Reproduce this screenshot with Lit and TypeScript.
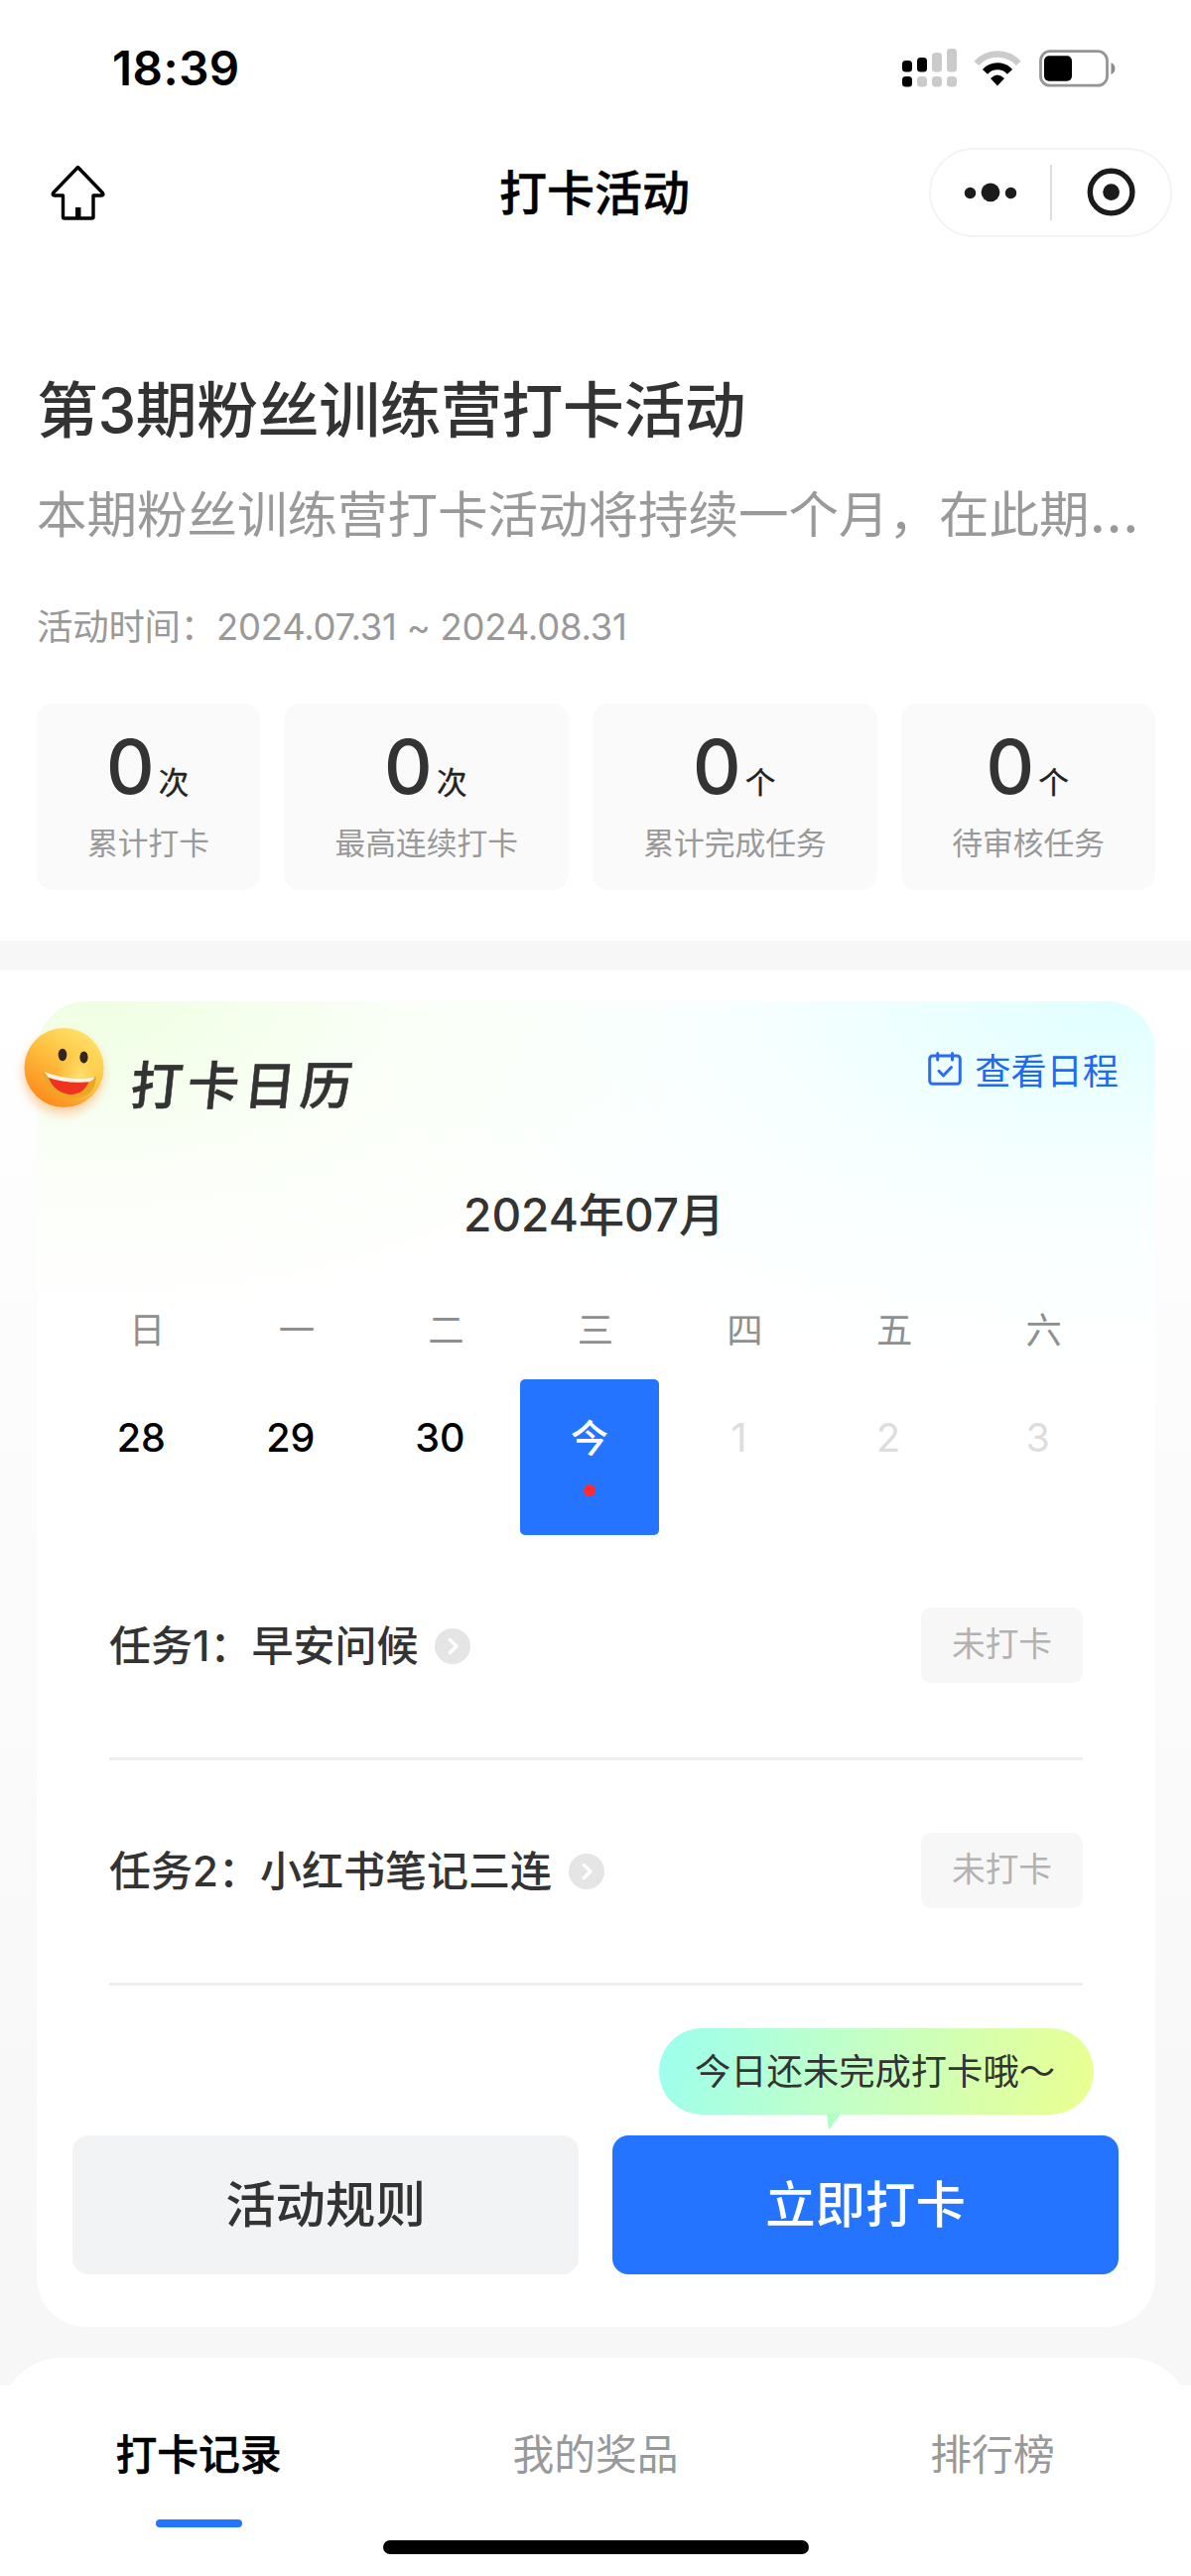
import { LitElement, html, css, svg } from "lit";
import { customElement, property } from "lit/decorators.js";
import { classMap } from "lit/directives/class-map.js";

const homeIcon = svg`<svg class="icon" width="60" height="60" viewBox="0 0 60 60">
  <path d="M30.5 4.5 L5.5 30.5 Q4.5 33 7 33 H15.5 V55 Q15.5 56 17 56 H44 Q46 56 46 55 V33 H54 Q57 33 55.5 30.5 Z"
    fill="none" stroke="#000" stroke-width="3.4" stroke-linejoin="round"/>
  <rect x="28" y="45" width="5.500" height="11" fill="#000"/>
</svg>`;

const signalIcon = svg`<svg class="icon" width="55" height="39" viewBox="0 0 55 39">
  <g fill="#000">
    <rect x="0" y="12" width="10" height="11.5" rx="3.5"/>
    <rect x="15" y="9" width="10" height="14.5" rx="3.5"/>
    <rect x="0" y="28" width="10" height="10.5" rx="3.5"/>
  </g>
  <g fill="#cbcbcb">
    <rect x="30" y="4" width="10" height="19.500" rx="3.500"/>
    <rect x="45" y="0" width="10" height="23.500" rx="3.500"/>
    <rect x="15" y="28" width="10" height="10.500" rx="3.500"/>
    <rect x="30" y="28" width="10" height="10.500" rx="3.500"/>
    <rect x="45" y="28" width="10" height="10.500" rx="3.500"/>
  </g>
</svg>`;

const wifiIcon = svg`<svg class="icon" width="48" height="36" viewBox="0 0 48 36">
  <path d="M2.800 12.900 A28.500 28.500 0 0 1 45.200 12.900" fill="none" stroke="#cbcbcb" stroke-width="6.500"/>
  <path d="M11.500 21.300 A17 17 0 0 1 36.500 21.300" fill="none" stroke="#000" stroke-width="7"/>
  <path d="M17 28 Q24 21 31 28 L24 35.500 Z" fill="#000"/>
</svg>`;

const batteryIcon = svg`<svg class="icon" width="77" height="38" viewBox="0 0 77 38">
  <rect x="1.500" y="1.700" width="67" height="34.500" rx="9.500" fill="none" stroke="#959595" stroke-width="2.800"/>
  <rect x="5" y="6.300" width="28" height="25.400" rx="5" fill="#000"/>
  <path d="M72.500 13 Q76.500 15 76.500 19 Q76.500 23 72.500 25 Z" fill="#8c8c8c"/>
</svg>`;

const moreIcon = svg`<svg class="icon" width="54" height="22" viewBox="0 0 54 22">
  <g fill="#1b1b1b"><circle cx="6.500" cy="11.500" r="5.700"/><circle cx="27" cy="10.800" r="9.400"/><circle cx="47.500" cy="11.500" r="5.700"/></g>
</svg>`;

const targetIcon = svg`<svg class="icon" width="50" height="50" viewBox="0 0 50 50">
  <circle cx="25.600" cy="24.600" r="21.300" fill="none" stroke="#1b1b1b" stroke-width="5.400"/>
  <circle cx="25.600" cy="24.600" r="8.400" fill="#1b1b1b"/>
</svg>`;

const calendarIcon = svg`<svg class="icon" width="34" height="34" viewBox="0 0 34 34">
  <g fill="none" stroke="#2a6df4" stroke-width="3" stroke-linecap="round" stroke-linejoin="round">
    <rect x="1.700" y="4" width="30.600" height="28.300" rx="3"/>
    <path d="M9.700 1.500 V8 M24.500 1.500 V8"/>
    <path d="M11 19.300 L15.500 24 L23.500 15.500"/>
  </g>
</svg>`;

const chevronIcon = svg`<svg class="icon" width="36" height="36" viewBox="0 0 36 36">
  <circle cx="18" cy="18" r="18" fill="#e5e5e5"/>
  <path d="M15.300 11.500 L22 18 L15.300 24.500" fill="none" stroke="#fff" stroke-width="3.400" stroke-linecap="round" stroke-linejoin="round"/>
</svg>`;

const smileIcon = svg`<svg width="110" height="120" viewBox="0 0 110 120">
  <defs>
    <linearGradient id="face" x1="0.78" y1="0.08" x2="0.22" y2="0.95">
      <stop offset="0" stop-color="#ffe067"/><stop offset="0.42" stop-color="#fdc240"/><stop offset="1" stop-color="#fd8a1c"/>
    </linearGradient>
    <radialGradient id="shine" cx="0.5" cy="0.5" r="0.5">
      <stop offset="0" stop-color="#ffe77c" stop-opacity="0.9"/><stop offset="1" stop-color="#ffd95c" stop-opacity="0"/>
    </radialGradient>
    <filter id="glow" x="-30%" y="-30%" width="160%" height="160%"><feGaussianBlur stdDeviation="5"/></filter>
  </defs>
  <circle cx="54" cy="61" r="41" fill="#ffb070" opacity="0.55" filter="url(#glow)"/>
  <circle cx="54.500" cy="55" r="40" fill="url(#face)"/>
  <ellipse cx="70" cy="64" rx="24" ry="26" fill="url(#shine)"/>
  <ellipse cx="53" cy="42" rx="4.300" ry="6.200" fill="#33261c"/>
  <ellipse cx="74.500" cy="44.500" rx="4.100" ry="6" fill="#33261c"/>
  <path d="M33 58 Q60 70 87 64 Q86 86 61 86 Q37 83 33 58 Z" fill="#eaa724"/>
  <path d="M38 63 Q60 70 80 67 Q76 82 60 82 Q44 80 38 63 Z" fill="#f0331f"/>
  <path d="M34.500 59 Q60 69 85.500 64.500 Q83 69.500 76 69.500 Q56 71 39 65 Z" fill="#fff4e4"/>
</svg>`;

interface Stat { value: number; unit: string; label: string; }
interface Day { text: string; kind: "past" | "today" | "future"; }

const STATS: Stat[] = [
  { value: 0, unit: "次", label: "累计打卡" },
  { value: 0, unit: "次", label: "最高连续打卡" },
  { value: 0, unit: "个", label: "累计完成任务" },
  { value: 0, unit: "个", label: "待审核任务" },
];
const WEEKDAYS = ["日", "一", "二", "三", "四", "五", "六"];
const DAYS: Day[] = [
  { text: "28", kind: "past" },
  { text: "29", kind: "past" },
  { text: "30", kind: "past" },
  { text: "今", kind: "today" },
  { text: "1", kind: "future" },
  { text: "2", kind: "future" },
  { text: "3", kind: "future" },
];
const TASKS = ["任务1：早安问候", "任务2：小红书笔记三连"];
const TABS = ["打卡记录", "我的奖品", "排行榜"];

@customElement("top-bar")
export class TopBar extends LitElement {
  static styles = css`
    :host { display: block; height: 250px; color: #000; }
    .icon { display: block; flex: none; }
    .status { display: flex; align-items: center; height: 137px; padding: 0 76px 0 113px; box-sizing: border-box; }
    .time { flex: 1; font-size: 47.5px; font-weight: 600; line-height: 60px; letter-spacing: 0.5px; }
    .signals { display: flex; align-items: center; }
    .wifi { margin: 0 18px 0 17px; }
    .nav { display: grid; grid-template-columns: 1fr auto 1fr; align-items: center; height: 113px; padding: 0 19px 0 48px; }
    .title { font-size: 48px; font-weight: 500; line-height: 60px; -webkit-text-stroke: 0.5px #000; margin: 2px 0 0 -31px; }
    .capsule { display: flex; align-items: center; justify-self: end; width: 245px; height: 90px; box-sizing: border-box;
      border: 2px solid #f4f4f4; border-radius: 45px; background: #fff; }
    .half { flex: 1; display: flex; justify-content: center; }
    .rule { width: 2px; height: 56px; background: #dedede; }
  `;
  render() {
    return html`
      <div class="status">
        <span class="time">18:39</span>
        <div class="signals">${signalIcon}<span class="wifi">${wifiIcon}</span>${batteryIcon}</div>
      </div>
      <div class="nav">
        ${homeIcon}
        <span class="title">打卡活动</span>
        <div class="capsule">
          <span class="half">${moreIcon}</span><span class="rule"></span><span class="half">${targetIcon}</span>
        </div>
      </div>`;
  }
}

@customElement("stat-tile")
export class StatTile extends LitElement {
  @property({ attribute: false }) stat!: Stat;
  static styles = css`
    :host { display: block; height: 188px; padding: 0 51px; box-sizing: border-box; border-radius: 16px; background: #fafafa; text-align: center; }
    .figure { display: flex; justify-content: center; align-items: baseline; height: 104px; margin-top: 11px; line-height: 104px; color: #333; }
    .value { font-size: 76px; font-weight: 500; margin-left: -2px; }
    .unit { font-size: 30.6px; font-weight: 400; -webkit-text-stroke: 0.4px #222; color: #222; margin-left: 4px; }
    .label { font-size: 30.75px; line-height: 40px; margin-top: 6px; color: #999; white-space: nowrap; }
  `;
  render() {
    return html`
      <div class="figure"><span class="value">${this.stat.value}</span><span class="unit">${this.stat.unit}</span></div>
      <div class="label">${this.stat.label}</div>`;
  }
}

@customElement("task-row")
export class TaskRow extends LitElement {
  @property() name = "";
  static styles = css`
    :host { display: flex; align-items: flex-start; justify-content: space-between; height: 227px; padding-top: 73.5px;
      box-sizing: border-box; border-bottom: 3px solid #eee; }
    .icon { display: block; }
    .name { display: flex; align-items: center; gap: 17px; height: 70px; font-size: 42px; font-weight: 500; color: #333; white-space: nowrap; }
    .more { margin-top: 8px; }
    .tag { width: 163px; height: 75.5px; line-height: 74px; border-radius: 10px; background: #f7f7f7; color: #b2b2b2;
      font-size: 33.7px; text-align: center; }
  `;
  render() {
    return html`
      <div class="name"><span>${this.name}</span><span class="more">${chevronIcon}</span></div>
      <div class="tag">未打卡</div>`;
  }
}

@customElement("app-root")
export class AppRoot extends LitElement {
  static styles = css`
    :host { display: block; width: 1200px; height: 2596px; overflow: hidden; background: #fff;
      font-family: Inter, "Noto Sans CJK SC", sans-serif; }
    .icon { display: block; }
    .hero { padding: 121.5px 36px 51px 37px; }
    .heading { font-size: 61.8px; line-height: 84px; font-weight: 500; letter-spacing: -0.35px; color: #333; white-space: nowrap; }
    .summary { margin-top: 28px; font-size: 50.5px; line-height: 70px; color: #999; white-space: nowrap; }
    .more { font-size: 58px; line-height: 1px; }
    .period { margin-top: 53px; font-size: 36.4px; line-height: 50px; letter-spacing: -0.2px; color: #999; white-space: nowrap; }
    .stats { display: flex; justify-content: space-between; margin-top: 52.5px; }
    .band { height: 30px; background: #f7f7f7; }
    .board { padding: 31px 36px 59px 37px; background: linear-gradient(#fff 0, #fdfdfd 20%, #f7f7f7 92%); }
    .card { position: relative; display: flex; flex-direction: column; height: 1336px; padding: 0 37px 0 36px; box-sizing: border-box;
      border-radius: 50px; background:
        radial-gradient(ellipse 620px 330px at 60px 0, rgba(239, 255, 226, 1), rgba(248, 255, 243, 0.6) 50%, rgba(255, 255, 255, 0)),
        radial-gradient(ellipse 740px 370px at 1080px 0, rgba(225, 255, 255, 1), rgba(243, 255, 255, 0.6) 50%, rgba(255, 255, 255, 0)),
        #fff; }
    .smile { position: absolute; left: -27px; top: 12px; line-height: 0; }
    .head { display: flex; justify-content: space-between; height: 185px; }
    .caption { margin: 53px 0 0 59px; height: 66px; font-size: 52px; line-height: 66px; font-weight: 500; letter-spacing: 5px; color: #333;
      -webkit-text-stroke: 0.6px #333; transform: skewX(-6deg); }
    .link { display: flex; align-items: center; gap: 13px; height: 50px; margin-top: 43px; font-size: 36.2px; color: #1f6af2; }
    .month { text-align: center; font-size: 46px; line-height: 60px; font-weight: 500; color: #333; margin-right: 3px; }
    .week { display: grid; grid-template-columns: repeat(7, 1fr); text-align: center; }
    .names { margin-top: 62px; font-size: 36.4px; line-height: 50px; color: #8f8f8f; }
    .days { margin: 23.5px 6px 0 -6px; justify-items: center; font-size: 39.5px; }
    .day { width: 140px; height: 157px; line-height: 118px; border-radius: 5px; font-weight: 500; color: #000; box-sizing: border-box; }
    .day.today { background: #2474ff; color: #fff; font-size: 38px; }
    .day.future { color: #ddd; font-weight: 400; }
    .dot { width: 12px; height: 12px; margin: -12px auto 0; border-radius: 50%; background: #ff2b30; }
    .tasks { margin: 0 36px 0 37px; }
    .bubble { position: relative; align-self: flex-end; width: 438px; height: 87px; margin: 43.5px 25px 0 0; line-height: 88px; border-radius: 44px;
      text-align: center; font-size: 36.3px; text-indent: -3px; color: #333; white-space: nowrap; background: linear-gradient(105deg, #9fffea 4%, #c6ffc4 48%, #e8ff94 96%); }
    .tail { position: absolute; left: 169px; top: 86px; }
    .actions { display: flex; gap: 34px; margin-top: 21px; }
    .btn { flex: 1; height: 140px; line-height: 139px; border-radius: 16px; text-align: center; font-size: 50.4px; font-weight: 500; color: #333; background: #f2f3f5; }
    .btn.primary { color: #fff; background: #2474ff; }
    .panel { position: relative; margin-top: -28px; height: 220px; border-radius: 62px 62px 0 0; background: #fff; }
    .tabs { display: grid; grid-template-columns: repeat(3, 1fr); padding-top: 68px; }
    .tab { display: flex; flex-direction: column; align-items: center; font-size: 41.8px; line-height: 60px; color: #999; }
    .tab.active { font-weight: 500; color: #000; -webkit-text-stroke: 0.5px #000; }
    .mark { width: 87px; height: 8px; margin-top: 35px; border-radius: 4px; }
    .active .mark { background: #2474ff; }
    .home-bar { width: 429px; height: 14px; margin: 12.5px auto 0; border-radius: 7px; background: #000; }
  `;
  render() {
    return html`
      <top-bar></top-bar>
      <section class="hero">
        <div class="heading">第3期粉丝训练营打卡活动</div>
        <div class="summary">本期粉丝训练营打卡活动将持续一个月，在此期<span class="more">…</span></div>
        <div class="period">活动时间：2024.07.31 ~ 2024.08.31</div>
        <div class="stats">${STATS.map((s) => html`<stat-tile .stat=${s}></stat-tile>`)}</div>
      </section>
      <div class="band"></div>
      <section class="board">
        <div class="card">
          <div class="smile">${smileIcon}</div>
          <div class="head">
            <div class="caption">打卡日历</div>
            <div class="link">${calendarIcon}<span>查看日程</span></div>
          </div>
          <div class="month">2024年07月</div>
          <div class="week names">${WEEKDAYS.map((d) => html`<span>${d}</span>`)}</div>
          <div class="week days">
            ${DAYS.map((d) => html`<div class=${classMap({ day: true, [d.kind]: true })}>${d.text}${d.kind === "today" ? html`<div class="dot"></div>` : ""}</div>`)}
          </div>
          <div class="tasks">${TASKS.map((t) => html`<task-row .name=${t}></task-row>`)}</div>
          <div class="bubble">今日还未完成打卡哦～
            <svg class="tail" width="14" height="16" viewBox="0 0 14 16"><path d="M0 0 H14 L3 15.500 Q2 16 1.800 15 Z" fill="#b0ffc6"/></svg>
          </div>
          <div class="actions"><div class="btn">活动规则</div><div class="btn primary">立即打卡</div></div>
        </div>
      </section>
      <section class="panel">
        <div class="tabs">
          ${TABS.map((t, i) => html`<div class=${classMap({ tab: true, active: i === 0 })}><span>${t}</span><span class="mark"></span></div>`)}
        </div>
        <div class="home-bar"></div>
      </section>`;
  }
}
